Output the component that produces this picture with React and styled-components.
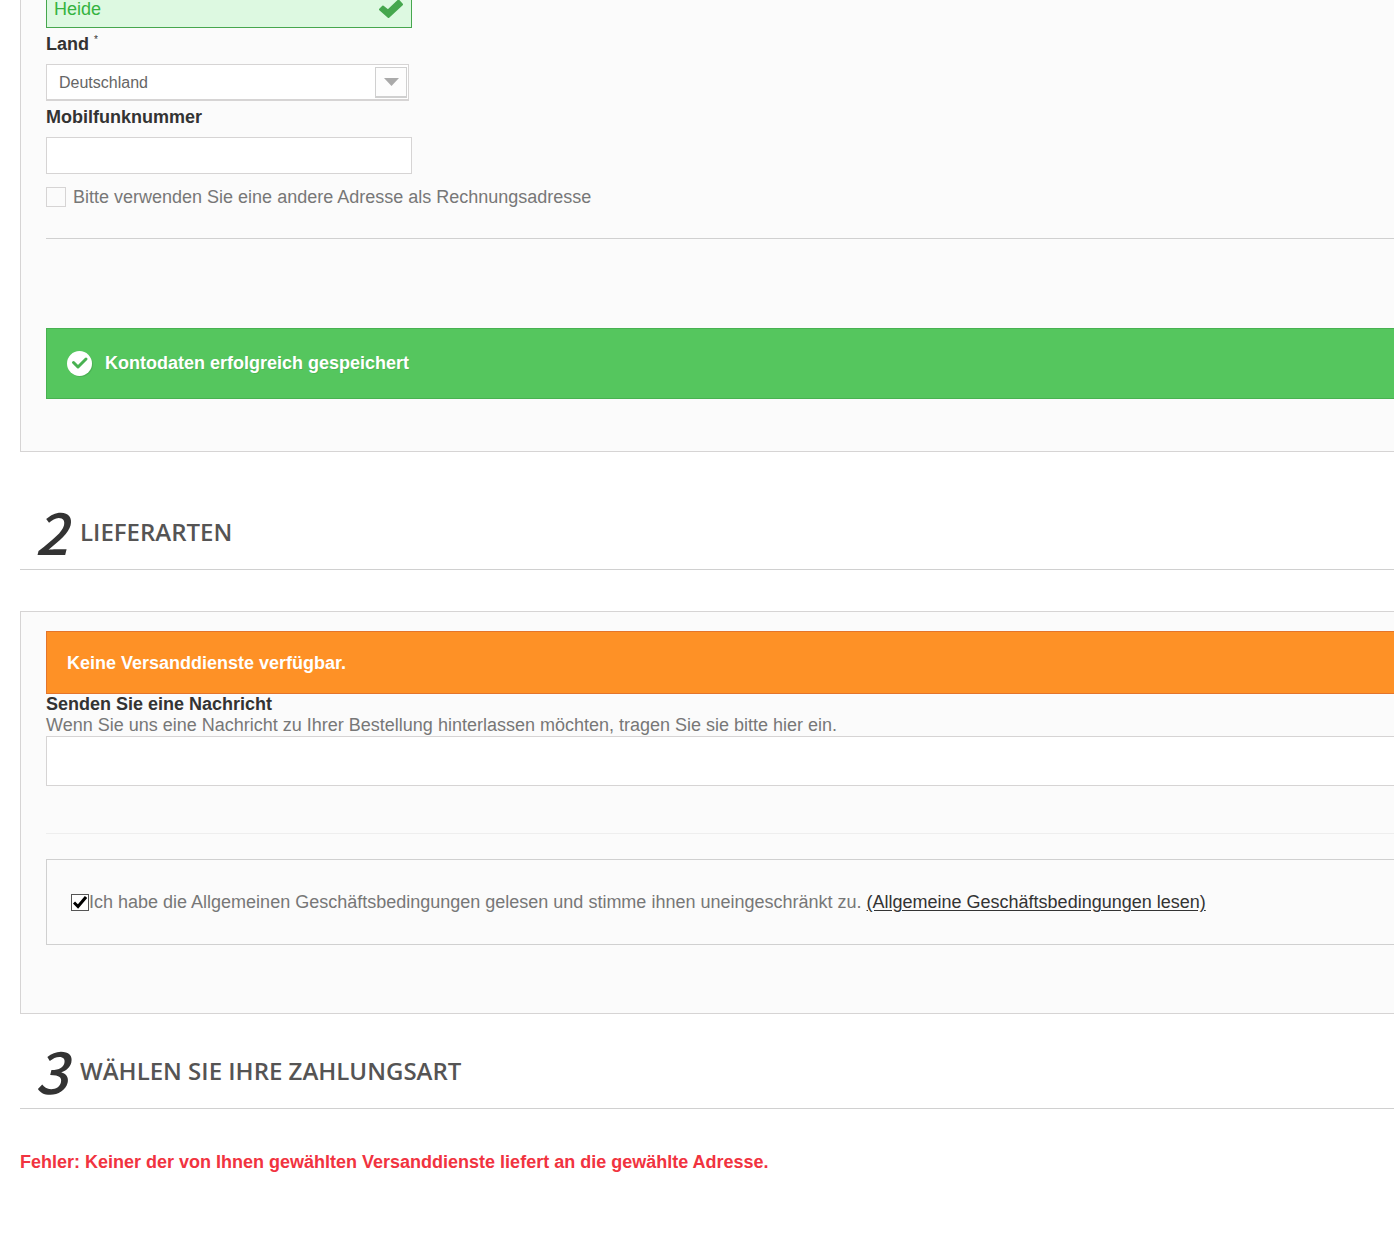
import React from 'react';
import styled, { createGlobalStyle } from 'styled-components';

const GlobalStyle = createGlobalStyle`
    * {
        box-sizing: border-box;
    }
    body {
        margin: 0;
        background: #ffffff;
        color: #777777;
        font-family: "Liberation Sans", Arial, sans-serif;
        font-size: 18px;
        line-height: 21px;
    }
`

const Page = styled.main`
    padding: 0 0 64px 20px;
    overflow: hidden;
`

const Panel = styled.section`
    margin-top: 41px;
    padding: 19px 0 68px 25px;
    border: 1px solid #d6d4d4;
    border-right: 0;
    background: #fbfbfb;
`

const AccountPanel = styled(Panel)`
    margin-top: -9px;
    padding: 0 0 52px 25px;
    border-top: 0;
`

const Label = styled.label`
    display: block;
    padding: ${props => props.$flush ? '0' : '6px 0 9px'};
    color: #333333;
    font-weight: bold;

    sup {
        font-size: 10px;
        font-weight: normal;
        line-height: 0;
    }
`

const FieldWrapper = styled.div`
    position: relative;
    width: 366px;
    max-width: 100%;

    svg {
        position: absolute;
        top: 8px;
        right: 8px;
    }
`

const TextField = styled.input`
    display: block;
    width: 100%;
    height: 37px;
    padding: 0 7px;
    border: 1px solid ${props => props.$valid ? '#46a74e' : '#d6d4d4'};
    background: ${props => props.$valid ? '#ddf9e1' : '#ffffff'};
    color: ${props => props.$valid ? '#35b33f' : '#777777'};
    font: inherit;
    outline: none;
`

const SelectWrapper = styled.div`
    position: relative;
    width: 363px;
    max-width: 100%;
`

const Select = styled.select`
    display: block;
    width: 100%;
    height: 37px;
    padding: 0 40px 0 12px;
    border: 1px solid #d6d4d4;
    border-bottom-width: 2px;
    border-radius: 0;
    background: #ffffff;
    color: #666666;
    font-family: inherit;
    font-size: 16px;
    appearance: none;
    outline: none;
`

const SelectArrow = styled.span`
    position: absolute;
    top: 3px;
    right: 2px;
    display: flex;
    align-items: center;
    justify-content: center;
    width: 32px;
    height: 31px;
    border: 1px solid #d0d0d0;
    border-bottom-width: 2px;
    background: #fdfdfd;
    pointer-events: none;
`

const CheckRow = styled.div`
    display: flex;
    align-items: flex-start;
    gap: 7px;
    margin-top: 13px;
`

const CheckBox = styled.input`
    width: 20px;
    height: 20px;
    margin: 0;
    border: 1px solid #d6d4d4;
    background: #fbfbfb;
    appearance: none;

    &:checked {
        background: #d6d4d4;
    }
`

const Divider = styled.hr`
    height: 1px;
    margin: ${props => props.$light ? '47px 0 25px' : '30px 0 89px'};
    border: 0;
    background: ${props => props.$light ? '#eeeeee' : '#d0d0d0'};
`

const Alert = styled.div`
    display: flex;
    align-items: center;
    gap: 13px;
    padding: 21px 20px 19px;
    border: 1px solid #e4752b;
    border-right: 0;
    background: #fe9126;
    color: #ffffff;
    font-weight: bold;
`

const SuccessAlert = styled(Alert)`
    padding: 22px 20px;
    border-color: #48b151;
    background: #55c65e;
    text-shadow: 1px 1px rgba(0, 0, 0, 0.1);

    svg {
        filter: drop-shadow(1px 1px rgba(0, 0, 0, 0.1));
    }
`

const StepHeading = styled.h2`
    display: flex;
    align-items: center;
    gap: 12px;
    margin: ${props => props.$close ? '20px' : '43px'} 0 0;
    padding: 0 0 0 15px;
    border-bottom: 1px solid #d0d0d0;
    color: #555454;
    font-family: "Open Sans", sans-serif;
    font-size: 24px;
    font-weight: 600;
    line-height: 74px;
    text-transform: uppercase;
`

const StepNumber = styled.span`
    padding-bottom: 4px;
    color: #333333;
    font-family: "Noto Sans CJK SC", "Open Sans", sans-serif;
    font-size: 58px;
    font-style: oblique;
    font-weight: 500;
    line-height: 70px;
`

const Hint = styled.p`
    margin: 0;
`

const Message = styled.textarea`
    display: block;
    width: 100%;
    height: 50px;
    padding: 6px;
    border: 1px solid #d6d4d4;
    border-right: 0;
    background: #ffffff;
    font: inherit;
    resize: none;
    outline: none;
`

const TermsBox = styled.div`
    display: flex;
    align-items: center;
    padding: 32px 0 31px 24px;
    border: 1px solid #d0d0d0;
    border-right: 0;

    a {
        margin-left: 5px;
        color: #333333;
        text-underline-offset: 2px;
    }
`

const TermsCheck = styled.span`
    position: relative;
    width: 18px;
    height: 17px;

    svg {
        position: absolute;
        top: 2px;
        left: 2px;
        visibility: hidden;
        pointer-events: none;
    }

    input:checked + svg {
        visibility: visible;
    }
`

const TermsInput = styled.input`
    display: block;
    width: 18px;
    height: 17px;
    margin: 0;
    border: 1px solid #555555;
    background: #ffffff;
    appearance: none;
`

const ErrorText = styled.p`
    margin: 43px 0 0;
    color: #f13340;
    font-weight: bold;
`

const ValidIcon = () => (
    <svg width="25" height="20" viewBox="0 0 25 20" aria-hidden="true">
        <path d="M1 10.500 4 7.500l5 4L19.500 1.500 23 5.500 9.500 18z" fill="#46a74e" stroke="#46a74e" strokeWidth="2" strokeLinejoin="round" />
    </svg>
)

const SuccessIcon = () => (
    <svg width="25" height="25" viewBox="0 0 25 25" aria-hidden="true">
        <circle cx="12.500" cy="12.500" r="12.500" fill="#ffffff" />
        <path d="M6.500 11.500 11 16l8-8" fill="none" stroke="#48b151" strokeWidth="3" strokeLinecap="round" strokeLinejoin="round" />
    </svg>
)

function App() {
    return (
        <>
            <GlobalStyle />
            <Page>
                <AccountPanel>
                    <FieldWrapper>
                        <TextField $valid type="text" aria-label="Ort" defaultValue="Heide" />
                        <ValidIcon />
                    </FieldWrapper>
                    <Label htmlFor="country">Land <sup>*</sup></Label>
                    <SelectWrapper>
                        <Select id="country" defaultValue="de">
                            <option value="de">Deutschland</option>
                        </Select>
                        <SelectArrow>
                            <svg width="16" height="9" viewBox="0 0 16 9" aria-hidden="true">
                                <path d="M1 0h15L8.500 8z" fill="#aaaaaa" />
                            </svg>
                        </SelectArrow>
                    </SelectWrapper>
                    <Label htmlFor="mobile">Mobilfunknummer</Label>
                    <FieldWrapper>
                        <TextField id="mobile" type="tel" />
                    </FieldWrapper>
                    <CheckRow>
                        <CheckBox id="invoice" type="checkbox" />
                        <label htmlFor="invoice">Bitte verwenden Sie eine andere Adresse als Rechnungsadresse</label>
                    </CheckRow>
                    <Divider />
                    <SuccessAlert role="status">
                        <SuccessIcon />
                        Kontodaten erfolgreich gespeichert
                    </SuccessAlert>
                </AccountPanel>

                <StepHeading>
                    <StepNumber>2</StepNumber>
                    Lieferarten
                </StepHeading>
                <Panel>
                    <Alert role="alert">Keine Versanddienste verfügbar.</Alert>
                    <Label $flush htmlFor="message">Senden Sie eine Nachricht</Label>
                    <Hint>Wenn Sie uns eine Nachricht zu Ihrer Bestellung hinterlassen möchten, tragen Sie sie bitte hier ein.</Hint>
                    <Message id="message" />
                    <Divider $light />
                    <TermsBox>
                        <TermsCheck>
                            <TermsInput id="terms" type="checkbox" defaultChecked />
                            <svg width="14" height="13" viewBox="0 0 14 13" aria-hidden="true">
                                <path d="M1 6.500 5 10.500 13 1" fill="none" stroke="#000000" strokeWidth="3" />
                            </svg>
                        </TermsCheck>
                        <label htmlFor="terms">Ich habe die Allgemeinen Geschäftsbedingungen gelesen und stimme ihnen uneingeschränkt zu.</label>
                        <a href="#agb">(Allgemeine Geschäftsbedingungen lesen)</a>
                    </TermsBox>
                </Panel>

                <StepHeading $close>
                    <StepNumber>3</StepNumber>
                    Wählen Sie Ihre Zahlungsart
                </StepHeading>
                <ErrorText>Fehler: Keiner der von Ihnen gewählten Versanddienste liefert an die gewählte Adresse.</ErrorText>
            </Page>
        </>
    )
}

export default App;
